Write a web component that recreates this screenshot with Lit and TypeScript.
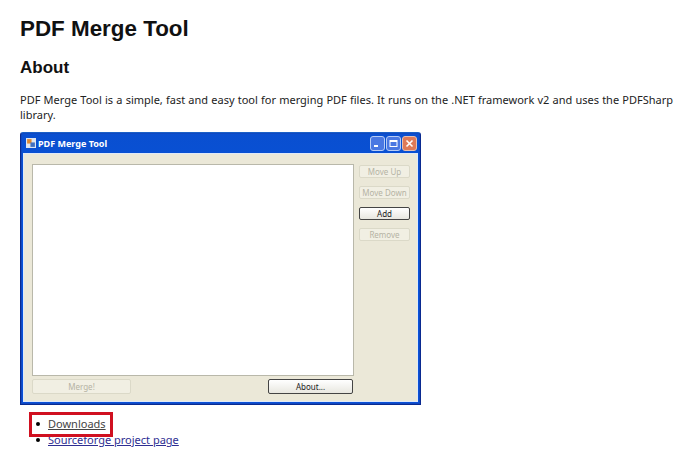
import { LitElement, html, css } from "lit";
import { customElement } from "lit/decorators.js";

@customElement("app-root")
export class AppRoot extends LitElement {
  static styles = css`
    :host { display: block; width: 693px; height: 468px; overflow: hidden; background: #fff; color: #111; font-family: "Noto Sans", sans-serif; }
    .page { padding: 0 0 0 20px; display: flex; flex-direction: column; align-items: flex-start; }
    h1 { margin: 15px 0 0; font: bold 22.4px/28px "Liberation Sans", Arial, sans-serif; height: 28px; }
    h2 { margin: 15px 0 0; font: bold 17px/20px "Liberation Sans", Arial, sans-serif; height: 20px; }
    p { margin: 14px 0 0; width: 653px; font-size: 11px; line-height: 15px; color: #222; text-align: justify; }
    .win { margin-top: 10px; width: 401px; height: 273px; box-sizing: border-box; background: linear-gradient(#0a4fd0, #0354e0 40%, #0a50d8); border: 1px solid #0a2a90; border-top-color: #1a60c8; border-radius: 3px 3px 0 0; padding: 0 2px 2px 2px; display: flex; flex-direction: column; box-shadow: inset 0 0 0 1px #1048c0; }
    .title { height: 20px; flex: none; display: flex; align-items: center; gap: 2px; padding: 0 1px 0 3px; color: #fff; font: bold 9px "Noto Sans", sans-serif; }
    .ficon { width: 10px; height: 10px; flex: none; }
    .name { flex: 1; }
    .caps { display: flex; gap: 1px; }
    .cap { width: 15px; height: 15px; box-sizing: border-box; border: 1px solid #b8ccf4; border-radius: 3px; background: #4a78e2; display: flex; align-items: center; justify-content: center; }
    .cap.x { background: #df7a58; border-color: #e8c0b0; }
    .client { flex: 1; background: #ebe8d8; border: 1px solid #dfe9f8; padding: 10px 7px 7px 8px; display: flex; flex-direction: column; min-height: 0; }
    .top { flex: 1; display: flex; gap: 5px; min-height: 0; }
    .list { width: 322px; box-sizing: border-box; background: #fff; border: 1px solid #b9b8aa; }
    .side { display: flex; flex-direction: column; gap: 8px; padding-top: 1px; }
    .btn { box-sizing: border-box; width: 51px; height: 13px; border: 1px solid #dbd9c8; border-radius: 2px; background: #f1efe3; color: #b5b3a3; font-size: 8px; line-height: 11px; text-align: center; white-space: nowrap; overflow: hidden; }
    .btn.on { border-color: #444; background: linear-gradient(#fff, #e8e7e0); color: #222; }
    .bottom { height: 15px; flex: none; margin-top: 3px; display: flex; justify-content: space-between; width: 321px; }
    .bottom .btn { height: 15px; line-height: 13px; }
    .merge { width: 99px !important; }
    .about { width: 85px !important; }
    ul { position: relative; list-style: none; margin: 11px 0 0; padding: 0 0 0 16px; font-size: 11px; line-height: 16px; }
    li { display: flex; align-items: center; gap: 8px; height: 16px; }
    li::before { content: ""; width: 4px; height: 4px; border-radius: 50%; background: #000; flex: none; }
    a { color: #2e2e92; text-decoration: underline; }
    a.v { color: #444; }
    .mark { position: absolute; left: 9px; top: -4px; width: 84px; height: 25px; box-sizing: border-box; border: 3px solid #d01020; }
  `;
  render() {
    return html`<div class="page">
      <h1>PDF Merge Tool</h1>
      <h2>About</h2>
      <p>PDF Merge Tool is a simple, fast and easy tool for merging PDF files. It runs on the .NET framework v2 and uses the PDFSharp library.</p>
      <div class="win">
        <div class="title">
          <svg class="ficon" viewBox="0 0 9 9"><rect width="9" height="9" fill="#dfe6f0"/><rect x="1" y="1" width="4" height="4" fill="#e08a30"/><rect x="4" y="4" width="4" height="4" fill="#4070c0"/></svg>
          <span class="name">PDF Merge Tool</span>
          <div class="caps">
            <span class="cap"><svg width="9" height="9" viewBox="0 0 9 9"><rect x="1" y="6" width="4" height="2" fill="#fff"/></svg></span>
            <span class="cap"><svg width="9" height="9" viewBox="0 0 9 9"><rect x="1" y="1.5" width="7" height="6" fill="none" stroke="#fff"/><rect x="1" y="1" width="7" height="2" fill="#fff"/></svg></span>
            <span class="cap x"><svg width="9" height="9" viewBox="0 0 9 9"><path d="M1.5 1.5L7.5 7.5M7.5 1.5L1.5 7.5" stroke="#fff" stroke-width="1.6"/></svg></span>
          </div>
        </div>
        <div class="client">
          <div class="top">
            <div class="list"></div>
            <div class="side">
              <div class="btn">Move Up</div>
              <div class="btn">Move Down</div>
              <div class="btn on">Add</div>
              <div class="btn">Remove</div>
            </div>
          </div>
          <div class="bottom">
            <div class="btn merge">Merge!</div>
            <div class="btn on about">About...</div>
          </div>
        </div>
      </div>
      <ul>
        <li><a class="v" href="#">Downloads</a></li>
        <li><a href="#">Sourceforge project page</a></li>
        <div class="mark"></div>
      </ul>
    </div>`;
  }
}
